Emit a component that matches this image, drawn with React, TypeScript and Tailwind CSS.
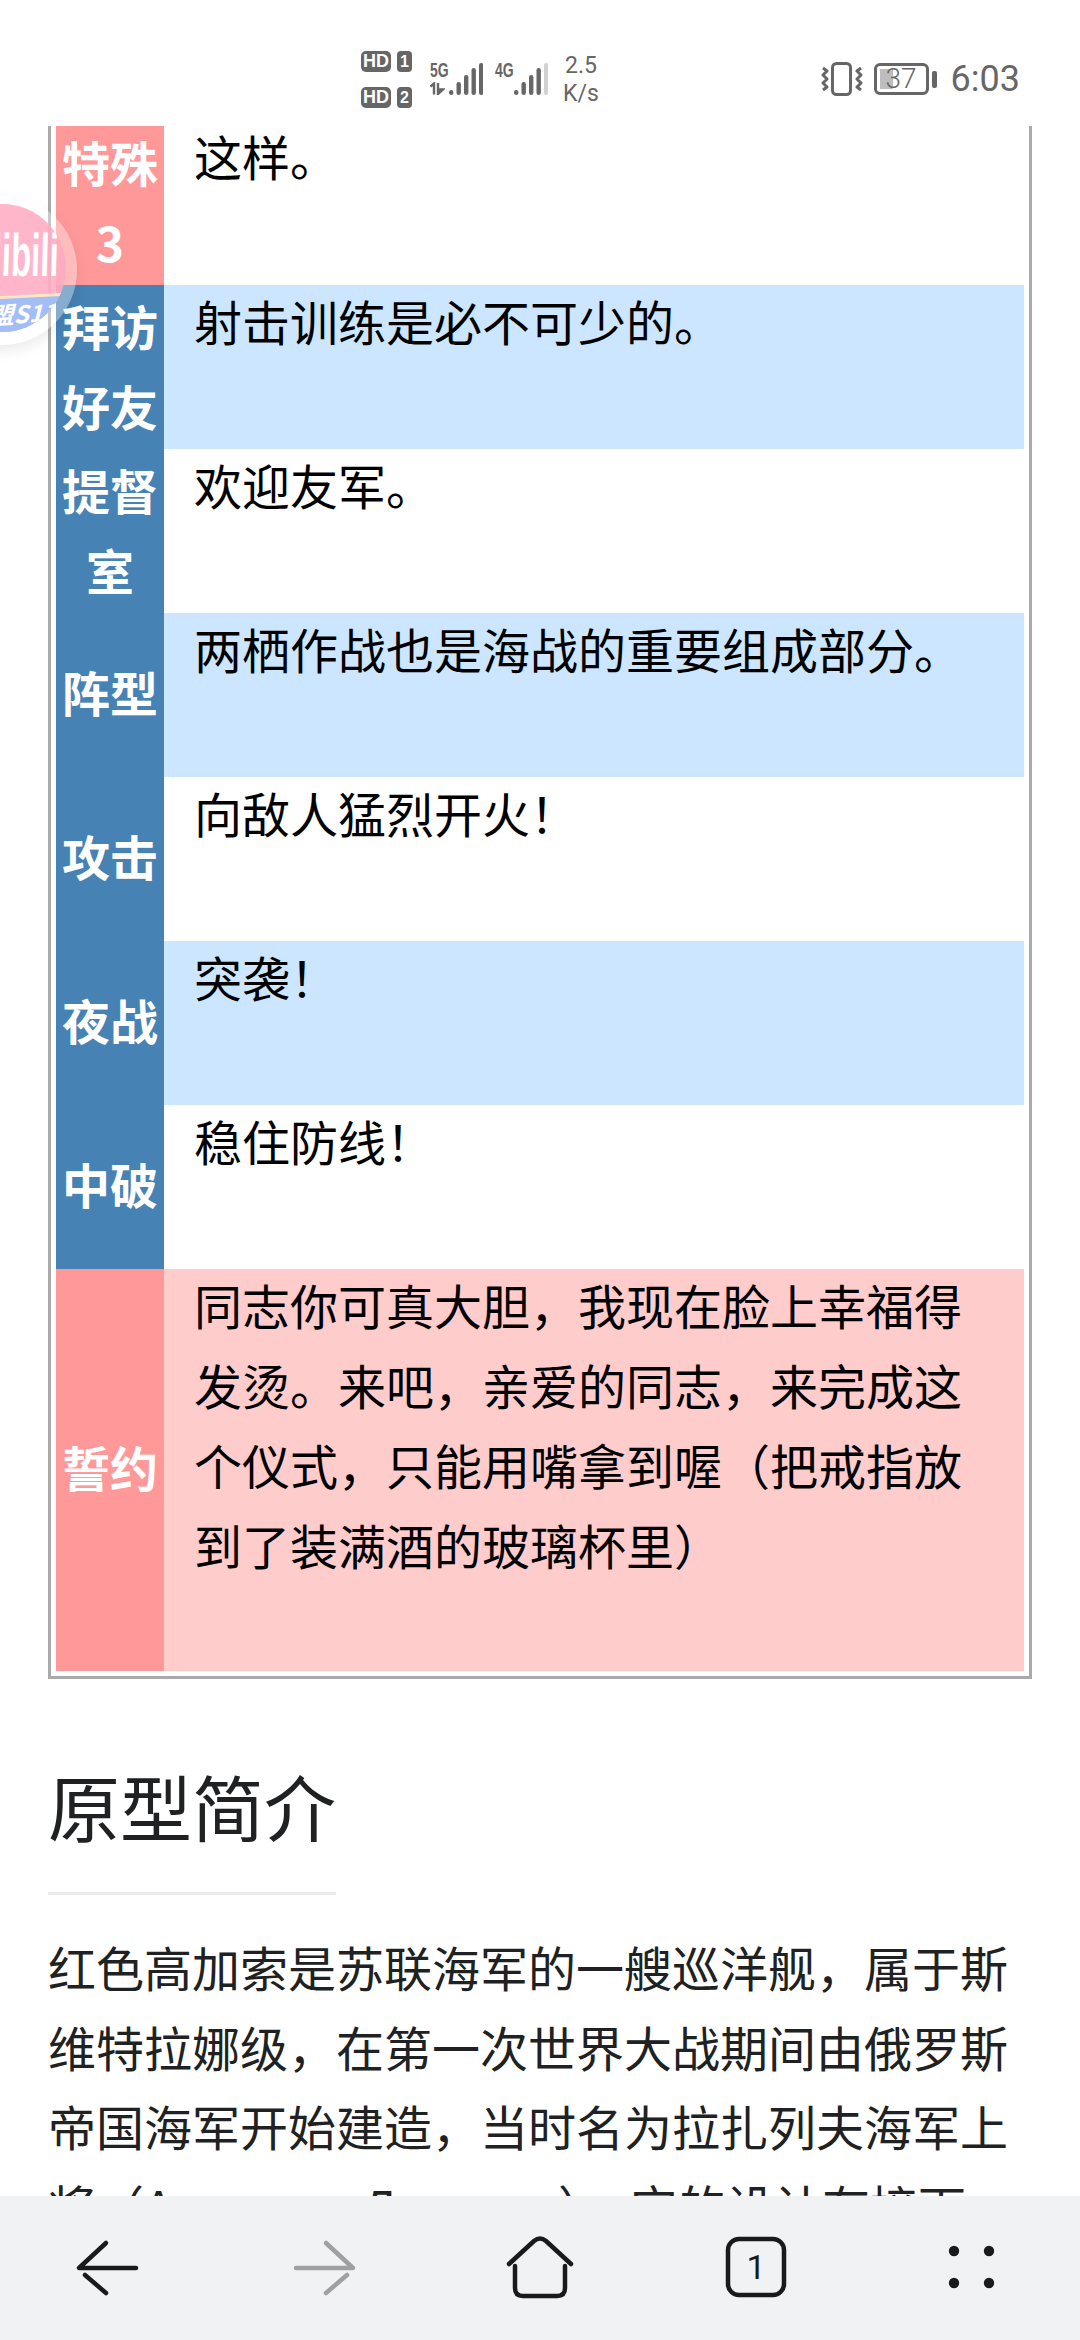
const cjk = "font-['Noto_Sans_CJK_SC','Noto_Sans',sans-serif]";

type Row = { h: string[]; t: string; pink?: boolean; alt?: boolean; heightClass: string };

const rows: Row[] = [
  { h: ['特殊', '3'], t: '这样。', pink: true, heightClass: 'h-[159px]' },
  { h: ['拜访', '好友'], t: '射击训练是必不可少的。', alt: true, heightClass: 'h-[164px]' },
  { h: ['提督', '室'], t: '欢迎友军。', heightClass: 'h-[164px]' },
  { h: ['阵型'], t: '两栖作战也是海战的重要组成部分。', alt: true, heightClass: 'h-[164px]' },
  { h: ['攻击'], t: '向敌人猛烈开火！', heightClass: 'h-[164px]' },
  { h: ['夜战'], t: '突袭！', alt: true, heightClass: 'h-[164px]' },
  { h: ['中破'], t: '稳住防线！', heightClass: 'h-[164px]' },
];

function Bars({ faded }: { faded?: boolean }) {
  const hs = [5, 13, 20, 27, 32];
  return (
    <svg width="34" height="33" viewBox="0 0 34 33">
      {hs.map((h, i) => (
        <rect key={i} x={i * 7.5} y={33 - h} width="4.4" height={h} rx="2.2" fill={faded && i === 4 ? '#d2d2d2' : '#666'} />
      ))}
    </svg>
  );
}

function StatusBar() {
  return (
    <div className="h-[126px] bg-white flex items-start pl-[361px] pr-[60px] text-[#666] relative z-10">
      <div className="mt-[51px] flex flex-col gap-[15px] font-['Liberation_Sans',sans-serif] font-bold leading-none">
        {['1', '2'].map((n) => (
          <div key={n} className="flex gap-[6px] h-[21px]">
            <span className="w-[30px] h-[21px] rounded-[5px] bg-[#666] text-white text-[18px] leading-[21px] text-center">HD</span>
            <span className="w-[15px] h-[21px] rounded-[4px] bg-[#666] text-white text-[16px] leading-[21px] text-center">{n}</span>
          </div>
        ))}
      </div>
      <div className="ml-[18px] mt-[62px] relative w-[53px] h-[33px]">
        <span className="absolute left-0 top-[1px] text-[20px] leading-[15px] font-bold font-['Liberation_Sans',sans-serif] scale-x-[0.7] origin-left">5G</span>
        <svg className="absolute left-0 top-[20px]" width="15" height="13" viewBox="0 0 15 13">
          <path d="M0.5 4.5L4 1.5V12.5" stroke="#666" strokeWidth="2.4" fill="none" />
          <path d="M8 1V12L13 7.5H8" stroke="#666" strokeWidth="2.4" fill="#666" />
        </svg>
        <div className="absolute right-0 top-0">
          <Bars />
        </div>
      </div>
      <div className="ml-[12px] mt-[62px] relative w-[53px] h-[33px]">
        <span className="absolute left-0 top-[1px] text-[20px] leading-[15px] font-bold font-['Liberation_Sans',sans-serif] scale-x-[0.7] origin-left">4G</span>
        <div className="absolute right-0 top-0">
          <Bars faded />
        </div>
      </div>
      <div className="ml-[14px] mt-[52px] w-[38px] text-center font-['Roboto',sans-serif] text-[23px] leading-[28px] text-[#666]">
        <div>2.5</div>
        <div>K/s</div>
      </div>
      <div className="ml-auto mt-[62px] flex items-center h-[34px]">
        <svg width="42" height="34" viewBox="0 0 42 34">
          <rect x="11.5" y="1.5" width="18" height="31" rx="4" fill="none" stroke="#666" strokeWidth="3" />
          <path d="M2 6l4 3-4 4 4 4-4 4 4 4-4 3M40 6l-4 3 4 4-4 4 4 4-4 4 4 3" fill="none" stroke="#666" strokeWidth="3" strokeLinejoin="round" />
        </svg>
        <div className="ml-[11px] w-[55px] h-[32px] rounded-[6px] border-[3px] border-[#666] relative flex items-center justify-center">
          <div className="absolute left-[3px] top-[3px] bottom-[3px] w-[13px] bg-[#bdbdbd]" />
          <span className="relative font-['Roboto',sans-serif] text-[28px] leading-none text-[#666] font-light">37</span>
        </div>
        <div className="ml-[3px] w-[5px] h-[17px] rounded-[2px] bg-[#666]" />
        <span className="ml-[14px] font-['Roboto',sans-serif] text-[36px] leading-none text-[#666]">6:03</span>
      </div>
    </div>
  );
}

function Logo() {
  return (
    <div className="absolute left-[-73px] top-[195px] w-[150px] h-[150px] rounded-full bg-white/35 shadow-[0_6px_14px_rgba(0,0,0,0.08)] flex items-center justify-center z-20">
      <div className="w-[128px] h-[128px] -mt-[4px] rounded-full bg-[#ffa9c2]/85 overflow-hidden relative">
        <span className="absolute right-[7px] top-[22px] text-white font-bold text-[60px] leading-none -skew-x-3 scale-x-[0.55] origin-right whitespace-nowrap font-['Liberation_Sans',sans-serif]">ilibili</span>
        <div className="absolute left-[-4px] right-[-4px] top-[92px] h-[42px] bg-[#a3bdf7] border-t-[3px] border-[#ffe6c0] -skew-y-3 flex justify-end pr-[13px]">
          <span className={`text-white font-bold italic text-[24px] leading-[30px] whitespace-nowrap ${cjk}`}>联盟S11</span>
        </div>
      </div>
    </div>
  );
}

function Table() {
  return (
    <div className={`mx-[48px] border-x-[3px] border-b-[3px] border-[#aaaaaa] px-[5px] pb-[5px] text-[48px] leading-[80px] text-black ${cjk}`}>
      {rows.map((r, i) => (
        <div key={i} className={`grid grid-cols-[108px_1fr] ${r.heightClass}`}>
          <div className={`${r.pink ? 'bg-[#ff9999] justify-start' : 'bg-[#4682b4] justify-center pb-[8px]'} text-white font-bold flex flex-col items-center`}>
            {r.h.map((x, j) => (
              <span key={x} className={r.pink && j === 0 ? '-mt-[5px]' : ''}>{x}</span>
            ))}
          </div>
          <div className={`${r.alt ? 'bg-[#cce6ff]' : 'bg-white'} pl-[30px]`}>
            <div className={i === 0 ? '-mt-[11px]' : '-mt-[5px]'}>{r.t}</div>
          </div>
        </div>
      ))}
      <div className="grid grid-cols-[108px_1fr] h-[402px]">
        <div className="bg-[#ff9999] text-white font-bold flex items-center justify-center pb-[8px]">誓约</div>
        <div className="bg-[#ffcccc] pl-[30px] pr-[40px]">
          <div className="-mt-[5px]">同志你可真大胆，我现在脸上幸福得发烫。来吧，亲爱的同志，来完成这个仪式，只能用嘴拿到喔（把戒指放到了装满酒的玻璃杯里）</div>
        </div>
      </div>
    </div>
  );
}

function BottomBar() {
  return (
    <div className="absolute left-0 right-0 top-[2196px] h-[144px] bg-[#f1f2f4]">
      <svg width="1080" height="144" viewBox="0 0 1080 144" fill="none" strokeLinecap="round" strokeLinejoin="round">
        <g stroke="#1a1a1a" strokeWidth="4.5">
          <path d="M106 47L79 72H136" />
          <path d="M85 79L106 97" />
        </g>
        <g stroke="#a0a0a0" strokeWidth="4.5">
          <path d="M326 47L353 72H296" />
          <path d="M347 79L326 97" />
        </g>
        <g stroke="#1a1a1a" strokeWidth="4.5">
          <path d="M509 68L534 45Q540 40 546 45L571 68" />
          <path d="M515 70V92Q515 100 523 100H557Q565 100 565 92V70" />
          <rect x="728" y="43" width="56" height="56" rx="11" />
        </g>
        <g fill="#1a1a1a">
          <circle cx="954" cy="55" r="5.2" />
          <circle cx="989" cy="55" r="5.2" />
          <circle cx="954" cy="87" r="5.2" />
          <circle cx="989" cy="87" r="5.2" />
        </g>
      </svg>
      <span className="absolute left-[727px] top-[43px] w-[58px] text-center font-['Roboto',sans-serif] text-[34px] leading-[56px] text-[#1a1a1a]">1</span>
    </div>
  );
}

export default function App() {
  return (
    <div className="relative w-[1080px] h-[2340px] overflow-hidden bg-white">
      <StatusBar />
      <Table />
      <section className={`mx-[48px] text-[#202122] ${cjk}`}>
        <h2 className="mt-[72px] w-[288px] border-b-[3px] border-[#eaecf0] text-[72px] leading-[108px] pb-[33px]">原型简介</h2>
        <p className="mt-[32px] text-[48px] leading-[79.5px]">
          红色高加索是苏联海军的一艘巡洋舰，属于斯维特拉娜级，在第一次世界大战期间由俄罗斯帝国海军开始建造，当时名为拉扎列夫海军上将（Адмирал Лазарев），它的设计存接下
        </p>
      </section>
      <Logo />
      <BottomBar />
    </div>
  );
}
